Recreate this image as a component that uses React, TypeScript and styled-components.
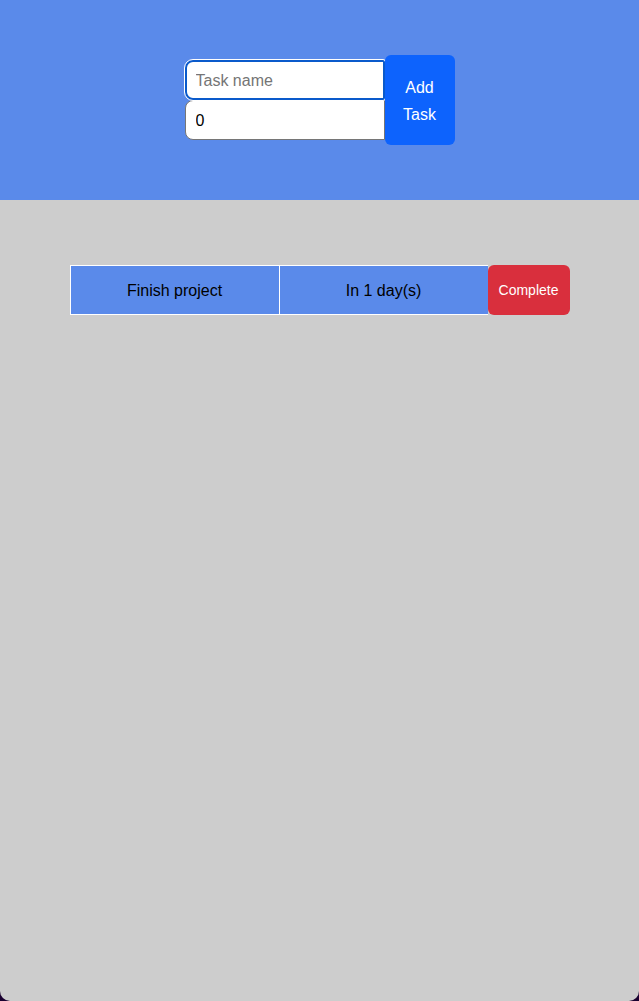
import React, { useState } from "react";
import styled, { createGlobalStyle, css } from "styled-components";

const GlobalStyle = createGlobalStyle`
  *, *::before, *::after {
    box-sizing: border-box;
  }

  html {
    background: #1a0030;
  }

  body {
    margin: 0;
    font-family: "Arial Narrow", "Liberation Sans", Arial, sans-serif;
    font-size: 16px;
    line-height: 27px;
    color: #000;
  }
`;

const Page = styled.div`
  display: flex;
  flex-direction: column;
  min-height: 100vh;
  background: #cdcdcd;
  border-radius: 0 0 10px 10px;
`;

const Header = styled.header`
  display: flex;
  align-items: center;
  justify-content: center;
  min-height: 200px;
  background: #5a8aea;
`;

const TaskForm = styled.form`
  display: flex;
  align-items: center;
`;

const Fields = styled.div`
  display: flex;
  flex-direction: column;
  width: 200px;
`;

const Field = styled.input<{ $highlighted?: boolean }>`
  width: 100%;
  height: 40px;
  padding: 1px 10px 0;
  border: 1px solid #767676;
  border-radius: 8px 0 0 8px;
  background: #fff;
  color: #000;
  font: inherit;
  appearance: textfield;

  &::placeholder {
    color: #757575;
    opacity: 1;
  }

  &::-webkit-inner-spin-button {
    appearance: none;
  }

  ${({ $highlighted }) =>
    $highlighted &&
    css`
      position: relative;
      padding: 1px 9px 0;
      border: 2px solid #0a5acb;
      border-radius: 8px 2px 2px 8px;
      outline: 1px solid #fff;
    `}
`;

const Button = styled.button`
  padding: 1px 8px 0;
  border: 0;
  border-radius: 6px;
  color: #fff;
  font: inherit;
  cursor: pointer;
`;

const AddButton = styled(Button)`
  position: relative;
  width: 70px;
  height: 90px;
  background: #0d63fd;
`;

const CompleteButton = styled(Button)`
  width: 82px;
  background: #d92f3d;
  font-size: 14px;
`;

const TaskList = styled.ul`
  display: flex;
  flex-direction: column;
  align-items: center;
  margin: 0;
  padding: 65px 20px;
  list-style: none;
`;

const TaskRow = styled.li`
  display: flex;
  width: 100%;
  max-width: 500px;
  height: 50px;
`;

const TaskCell = styled.span`
  display: flex;
  flex: 1;
  align-items: center;
  justify-content: center;
  padding-top: 1px;
  border: 1px solid #fff;
  border-right-width: 0;
  background: #5a8aea;
`;

interface Task {
  name: string;
  days: number;
}

export default function App() {
  const [tasks, setTasks] = useState<Task[]>([{ name: "Finish project", days: 1 }]);
  const [name, setName] = useState("");
  const [days, setDays] = useState(0);

  const addTask = (event: React.FormEvent) => {
    event.preventDefault();
    setTasks([...tasks, { name, days }]);
    setName("");
    setDays(0);
  };

  return (
    <>
      <GlobalStyle />
      <Page>
        <Header>
          <TaskForm onSubmit={addTask}>
            <Fields>
              <Field
                $highlighted
                type="text"
                aria-label="Task name"
                placeholder="Task name"
                value={name}
                onChange={(event) => setName(event.target.value)}
              />
              <Field
                type="number"
                aria-label="Days until deadline"
                value={days}
                onChange={(event) => setDays(Number(event.target.value))}
              />
            </Fields>
            <AddButton type="submit">Add Task</AddButton>
          </TaskForm>
        </Header>
        <TaskList>
          {tasks.map((task, index) => (
            <TaskRow key={index}>
              <TaskCell>{task.name}</TaskCell>
              <TaskCell>In {task.days} day(s)</TaskCell>
              <CompleteButton
                type="button"
                onClick={() => setTasks(tasks.filter((_, i) => i !== index))}
              >
                Complete
              </CompleteButton>
            </TaskRow>
          ))}
        </TaskList>
      </Page>
    </>
  );
}
